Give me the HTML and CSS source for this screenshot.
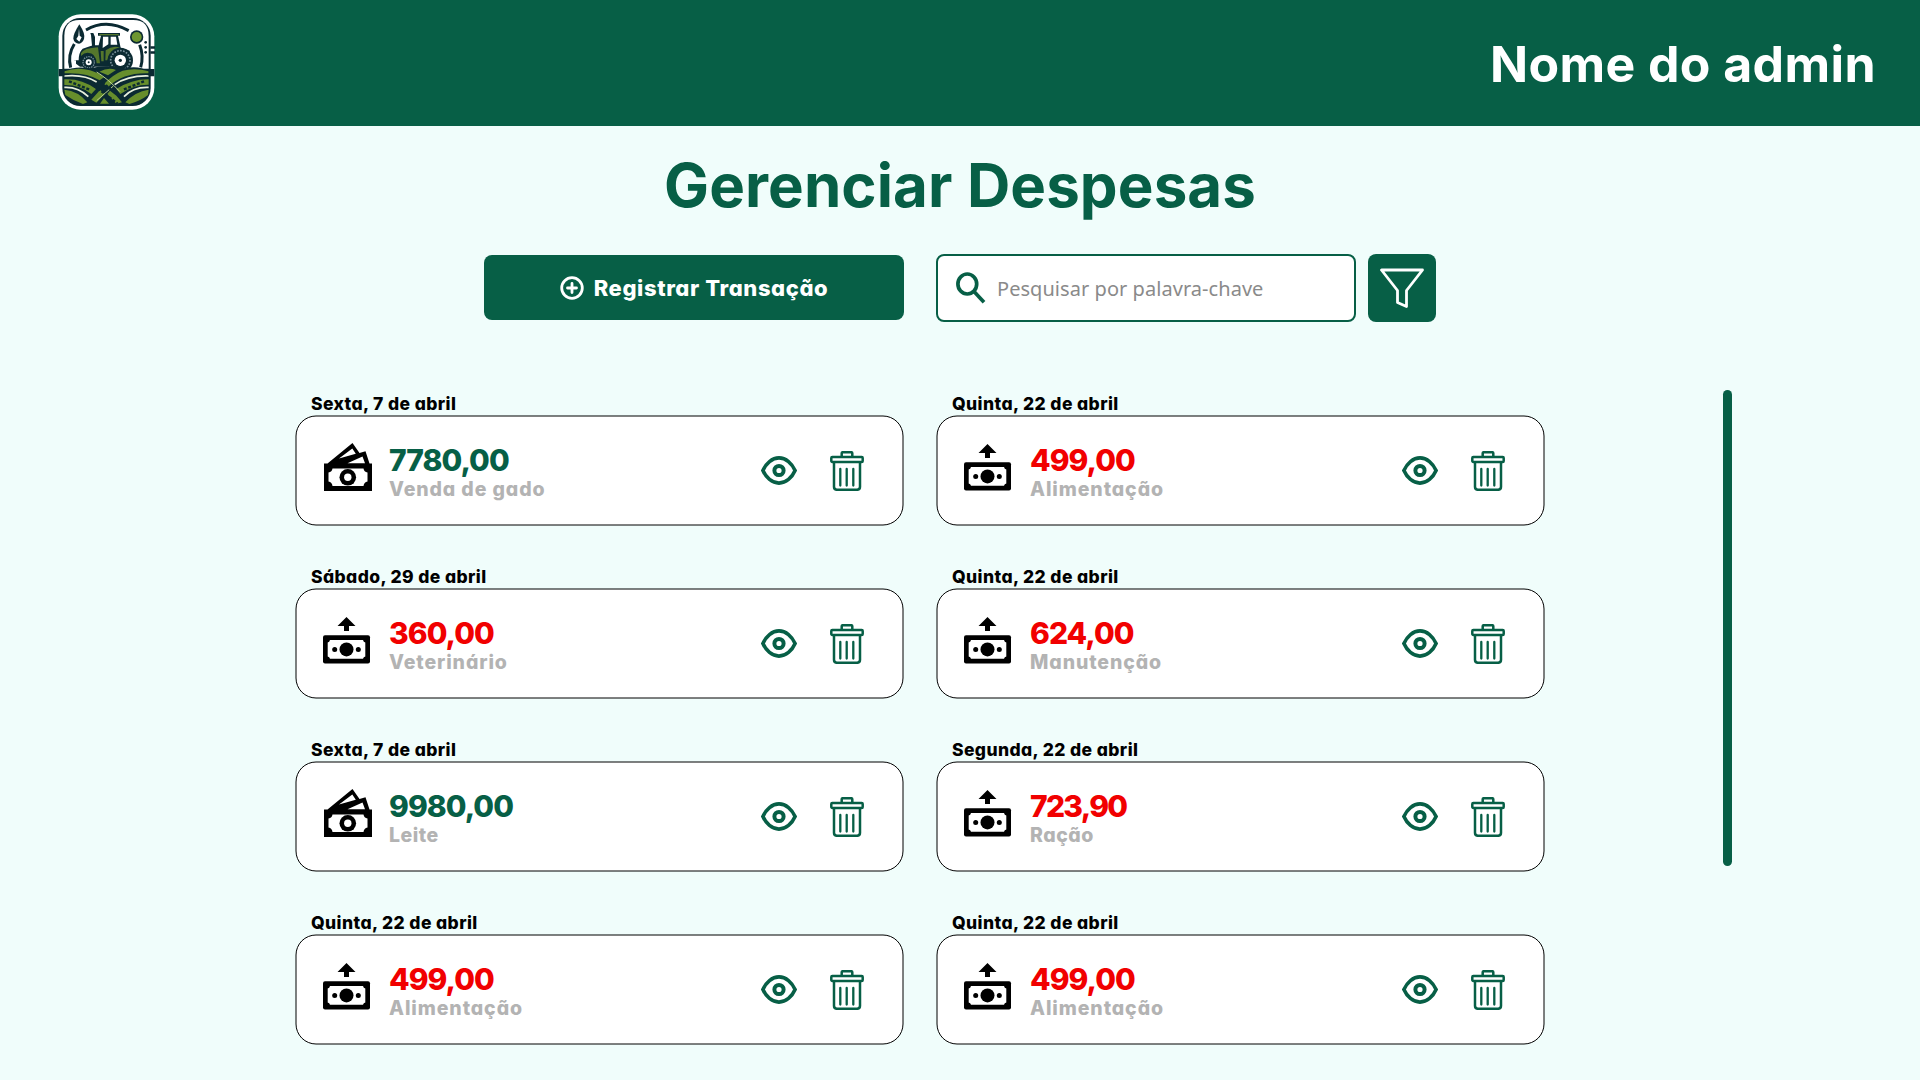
FILE: index.html
```html
<!DOCTYPE html>
<html lang="pt-BR">
<head>
<meta charset="utf-8">
<title>Gerenciar Despesas</title>
<link rel="stylesheet" href="styles.css">
</head>
<body>
<svg class="sprite" aria-hidden="true">
  <symbol id="cash" viewBox="0 0 48 48">
    <path d="M0 20.500H3.500L28.500 0L35.500 10L41.500 8.300L45.500 20.500H48V48H0Z"/>
    <path class="hole" d="M15 15.500L28.300 5.500L31.800 10.800Z M23.500 20.200L38.500 13.500L41 20.200Z M8.500 25.500H39.500Q40 29 43.500 29.500V38.500Q40 39 39.500 43H8.500Q8 39 4.500 38.500V29.500Q8 29 8.500 25.500Z"/>
    <circle cx="23.800" cy="34.300" r="8.300"/><circle class="hole" cx="23.800" cy="34.300" r="3.700"/>
  </symbol>
  <symbol id="spend" viewBox="0 0 48 48">
    <path d="M23.500 1L32.500 10H26V15H21V10H14.500Z"/>
    <rect x="0" y="19.300" width="47" height="28.200" rx="2"/>
    <path class="hole" d="M7 24H40Q40.500 26 42.300 26.500V40.500Q40.500 41 40 42.800H7Q6.500 41 4.700 40.500V26.500Q6.500 26 7 24Z"/>
    <circle cx="23.500" cy="33.400" r="7"/><circle cx="11.700" cy="33.400" r="2.500"/><circle cx="35.300" cy="33.400" r="2.500"/>
  </symbol>
  <symbol id="eye" viewBox="0 0 36 29">
    <path class="line" stroke-width="3.600" d="M1.900 14.500C5 7.500 11 1.900 18 1.900S31 7.500 34.100 14.500C31 21.500 25 27.100 18 27.100S5 21.500 1.900 14.500Z"/>
    <circle class="line" stroke-width="4" cx="18" cy="14.500" r="4.600"/>
  </symbol>
  <symbol id="trash" viewBox="0 0 34 40">
    <path class="line" stroke-width="2.500" d="M11.700 5V2.200Q11.700 1.200 12.700 1.200H21.300Q22.300 1.200 22.300 2.200V5M4 12V35.800Q4 38.800 7 38.800H27Q30 38.800 30 35.800V12"/>
    <rect class="line" stroke-width="2.500" x="1.300" y="6" width="31.400" height="5" rx="1"/>
    <path class="line" stroke-width="2.300" stroke-linecap="round" d="M10.300 18V34.500M16.700 18V34.500M23.300 18V34.500"/>
  </symbol>
  <symbol id="frame" viewBox="0 0 609 111">
    <rect class="outline" x="1" y="1" width="607" height="109" rx="20"/>
  </symbol>
</svg>

<header class="topbar">
  <svg class="logo" viewBox="51 39 303 294" aria-label="Logo">
    <rect x="56" y="43" width="287" height="286" rx="66" fill="#fff"/>
    <rect x="67" y="54" width="265" height="264" rx="54" fill="#0b2a32"/>
    <path d="M73 206V108Q73 60 118 60H280Q326 60 326 108V206Z" fill="#fff"/>
    <path d="M92 203Q82 165 103 132M138 90Q199 55 266 92M299 134Q312 168 302 202" fill="none" stroke="#0b2a32" stroke-width="9"/>
    <path d="M118 73Q137 102 132 117Q127 130 117 131Q103 130 100 116Q99 103 118 73Z" fill="#0b2a32"/>
    <path d="M117 86L119 107L125 112L118 125L109 117L115 107Z" fill="#fff"/>
    <circle cx="290" cy="111" r="20" fill="#0b2a32"/><circle cx="290" cy="111" r="15" fill="#6d9630"/>
    <g fill="#0b2a32"><circle cx="317" cy="127" r="4"/><circle cx="317" cy="142" r="4"/><circle cx="317" cy="157" r="4"/></g>
    <path d="M174 99H240V107H234L242 143L269 152L273 200H120L108 191V180H103V181H116Q116 157 128 146L154 137H156L153 105L151 99H160L165 111V136H176L183 107H174Z" fill="#0b2a32"/>
    <path d="M189 110H205V133L188 144ZM212 110H228L232 134H212Z" fill="#fff"/>
    <path d="M123 160Q130 144 174 142L180 190H170Q168 158 143 158Q132 158 123 168ZM178 102H236V106H178ZM197 151Q218 135 240 143Q208 150 202 181H196ZM182 153H191V184H184Z" fill="#55772c"/>
    <circle cx="146" cy="187" r="22" fill="#0b2a32"/><circle cx="146" cy="187" r="17" fill="none" stroke="#78909b" stroke-width="4" stroke-dasharray="4 3"/><circle cx="146" cy="187" r="9" fill="#fff"/>
    <circle cx="241" cy="181" r="38" fill="#0b2a32"/><circle cx="241" cy="181" r="29" fill="none" stroke="#78909b" stroke-width="5" stroke-dasharray="5 4"/><circle cx="241" cy="181" r="17" fill="#fff"/><circle cx="241" cy="181" r="5" fill="#0b2a32"/><circle cx="146" cy="187" r="3" fill="#0b2a32"/>
    <path d="M73 214Q104 197 150 205Q200 193 255 205Q296 196 326 214V268Q324 315 280 315H118Q76 313 73 268Z" fill="#0b2a32"/>
    <path d="M73 214Q110 200 150 211Q176 219 192 232L179 241Q139 216 73 220ZM178 215Q205 201 228 210L204 226ZM326 214Q286 202 248 212Q218 224 192 252L205 260Q251 217 326 220ZM73 238Q124 235 168 267L154 282Q119 254 73 255ZM326 238Q277 237 229 267L241 282Q283 253 326 254ZM73 269Q115 273 142 307L129 312Q100 302 76 285ZM326 269Q285 275 256 307L268 312Q301 303 324 285ZM180 270L154 299L169 308L195 281ZM210 272L229 287L246 307L229 311L202 282ZM192 294L207 311H180Z" fill="#678e2c"/>
    <path d="M73 228Q133 222 170 246M73 262Q115 260 145 290M326 228Q264 226 224 254M326 262Q279 260 252 290" fill="none" stroke="#e9f0dd" stroke-width="5"/>
    <path d="M170 216Q203 236 240 275M220 258L170 302" fill="none" stroke="#b9cf90" stroke-width="3"/>
    <path d="M87 244L149 269M312 244L250 269M162 257L233 311M187 246L213 269" fill="none" stroke="#0b2a32" stroke-width="7" stroke-dasharray="9 5"/>
    <path d="M56 207H73V229H56ZM326 207H343V229H326ZM331 139H345V146H331ZM331 154H345V161H331Z" fill="#0b2a32"/>
  </svg>
  <span class="admin">Nome do admin</span>
</header>

<main>
  <h1 class="title">Gerenciar Despesas</h1>

  <div class="toolbar">
    <button class="register" type="button">
      <svg class="plus" viewBox="0 0 24 24"><circle cx="12" cy="12" r="10.300"/><path d="M12 7.500V16.500M7.500 12H16.500"/></svg>
      <span>Registrar Transação</span>
    </button>
    <label class="search">
      <svg class="lens" viewBox="0 0 30 32"><ellipse cx="11.300" cy="12" rx="9.400" ry="10"/><path d="M18 19.500L28 30.300"/></svg>
      <span>Pesquisar por palavra-chave</span>
    </label>
    <button class="filter" type="button" aria-label="Filtrar">
      <svg class="funnel" viewBox="0 0 44 41"><path d="M1.500 2H42.500L26.500 22.500V38.500L17.500 34.500V22.500Z"/></svg>
    </button>
  </div>

  <div class="content">
    <div class="list">
      <section class="entry"><h2 class="date">Sexta, 7 de abril</h2><article class="card"><svg class="frame"><use href="#frame"/></svg><svg class="kind income"><use href="#cash"/></svg><div class="info"><strong class="amount in">7780,00</strong><span class="label">Venda de gado</span></div><svg class="eye"><use href="#eye"/></svg><svg class="trash"><use href="#trash"/></svg></article></section>
      <section class="entry"><h2 class="date">Quinta, 22 de abril</h2><article class="card"><svg class="frame"><use href="#frame"/></svg><svg class="kind"><use href="#spend"/></svg><div class="info"><strong class="amount">499,00</strong><span class="label">Alimentação</span></div><svg class="eye"><use href="#eye"/></svg><svg class="trash"><use href="#trash"/></svg></article></section>
      <section class="entry"><h2 class="date">Sábado, 29 de abril</h2><article class="card"><svg class="frame"><use href="#frame"/></svg><svg class="kind"><use href="#spend"/></svg><div class="info"><strong class="amount">360,00</strong><span class="label">Veterinário</span></div><svg class="eye"><use href="#eye"/></svg><svg class="trash"><use href="#trash"/></svg></article></section>
      <section class="entry"><h2 class="date">Quinta, 22 de abril</h2><article class="card"><svg class="frame"><use href="#frame"/></svg><svg class="kind"><use href="#spend"/></svg><div class="info"><strong class="amount">624,00</strong><span class="label">Manutenção</span></div><svg class="eye"><use href="#eye"/></svg><svg class="trash"><use href="#trash"/></svg></article></section>
      <section class="entry"><h2 class="date">Sexta, 7 de abril</h2><article class="card"><svg class="frame"><use href="#frame"/></svg><svg class="kind income"><use href="#cash"/></svg><div class="info"><strong class="amount in">9980,00</strong><span class="label short">Leite</span></div><svg class="eye"><use href="#eye"/></svg><svg class="trash"><use href="#trash"/></svg></article></section>
      <section class="entry"><h2 class="date">Segunda, 22 de abril</h2><article class="card"><svg class="frame"><use href="#frame"/></svg><svg class="kind"><use href="#spend"/></svg><div class="info"><strong class="amount tight">723,90</strong><span class="label short">Ração</span></div><svg class="eye"><use href="#eye"/></svg><svg class="trash"><use href="#trash"/></svg></article></section>
      <section class="entry"><h2 class="date">Quinta, 22 de abril</h2><article class="card"><svg class="frame"><use href="#frame"/></svg><svg class="kind"><use href="#spend"/></svg><div class="info"><strong class="amount">499,00</strong><span class="label">Alimentação</span></div><svg class="eye"><use href="#eye"/></svg><svg class="trash"><use href="#trash"/></svg></article></section>
      <section class="entry"><h2 class="date">Quinta, 22 de abril</h2><article class="card"><svg class="frame"><use href="#frame"/></svg><svg class="kind"><use href="#spend"/></svg><div class="info"><strong class="amount">499,00</strong><span class="label">Alimentação</span></div><svg class="eye"><use href="#eye"/></svg><svg class="trash"><use href="#trash"/></svg></article></section>
    </div>
    <div class="scrollbar"></div>
  </div>
</main>
</body>
</html>
```
FILE: styles.css
```css
:root {
  --green: #075f46;
  --page: #f0fdfb;
}
* { box-sizing: border-box; }
body {
  margin: 0;
  height: 1080px;
  overflow: hidden;
  background: var(--page);
  font-family: Inter, "Liberation Sans", sans-serif;
}
svg { display: block; flex: none; }
.sprite { position: absolute; width: 0; height: 0; }
.hole { fill: #fff; }
.line { fill: none; stroke: var(--green); }
.outline { fill: #fff; stroke: #000; stroke-width: 1; }

.topbar {
  display: flex;
  align-items: center;
  justify-content: space-between;
  height: 126px;
  padding: 0 44px 0 57px;
  background: var(--green);
}
.logo { width: 101px; height: 98px; margin-bottom: 2px; }
.admin { padding-top: 1px; color: #fff; font-size: 50px; font-weight: 700; line-height: 60px; letter-spacing: 0.4px; }

.title {
  margin: 23px 0 33px;
  color: var(--green);
  font-size: 60px;
  font-weight: 700;
  line-height: 72px;
  letter-spacing: 0.1px;
  text-align: center;
}

.toolbar {
  display: flex;
  align-items: center;
  height: 68px;
  padding-left: 484px;
}
.register {
  display: flex;
  align-items: center;
  justify-content: center;
  gap: 10px;
  width: 420px;
  height: 65px;
  margin-bottom: 1px;
  padding: 0;
  border: 0;
  border-radius: 8px;
  background: var(--green);
  color: #fff;
  font-family: inherit;
  font-size: 22px;
  font-weight: 800;
  letter-spacing: 0.6px;
  font-feature-settings: "cv11";
}
.plus { width: 24px; height: 24px; fill: none; stroke: #fff; stroke-width: 2.8; stroke-linecap: round; }
.search {
  display: flex;
  align-items: center;
  width: 420px;
  height: 68px;
  margin: 0 12px 0 32px;
  padding-left: 18px;
  border: 2px solid var(--green);
  border-radius: 8px;
  background: #fff;
  color: #8a8a8a;
  font: 20px/28px "Noto Sans", sans-serif;
  letter-spacing: 0.05px;
}
.search span { margin-left: 11px; padding-top: 2px; }
.lens { width: 30px; height: 32px; fill: none; stroke: var(--green); stroke-width: 3.7; }
.filter {
  display: flex;
  align-items: center;
  justify-content: center;
  width: 68px;
  height: 68px;
  padding: 0;
  border: 0;
  border-radius: 8px;
  background: var(--green);
}
.funnel { width: 44px; height: 41px; fill: none; stroke: #fff; stroke-width: 2.8; stroke-linejoin: round; }

.content {
  display: flex;
  align-items: flex-start;
  padding: 68px 0 0 296px;
}
.list {
  display: grid;
  grid-template-columns: 607px 607px;
  gap: 40px 34px;
  padding-top: 2px;
  font-feature-settings: "cv11";
}
.date {
  margin: 0;
  padding-left: 15px;
  font-size: 17.5px;
  font-weight: 800;
  line-height: 24px;
  letter-spacing: 0.4px;
  white-space: nowrap;
}
.card {
  position: relative;
  display: flex;
  align-items: flex-start;
  height: 109px;
  padding: 27px 39px 0 27px;
}
/* Hairline outline, drawn one pixel outside the card on each side */
.frame { position: absolute; left: -1px; top: -1px; width: 609px; height: 111px; }
.kind { position: relative; width: 48px; height: 48px; }
.income { margin: 0 -1px 0 1px; }
.info {
  position: relative;
  display: flex;
  flex: 1;
  flex-direction: column;
  margin: 2px 0 0 18px;
}
.amount { color: #f10000; font-size: 30px; font-weight: 800; line-height: 30px; letter-spacing: -0.95px; }
.amount.in { color: var(--green); }
.amount.tight { letter-spacing: -1.7px; }
.label { padding-top: 1px; color: #b3b3b3; font-size: 19.5px; font-weight: 800; line-height: 26px; letter-spacing: 0.9px; }
.label.short { letter-spacing: 0.5px; }
.eye { position: relative; width: 36px; height: 29px; margin: 13px 33px 0 0; }
.trash { position: relative; width: 34px; height: 40px; margin-top: 8px; }

.scrollbar {
  width: 9px;
  height: 476px;
  margin-left: 179px;
  border-radius: 5px;
  background: var(--green);
}
```
